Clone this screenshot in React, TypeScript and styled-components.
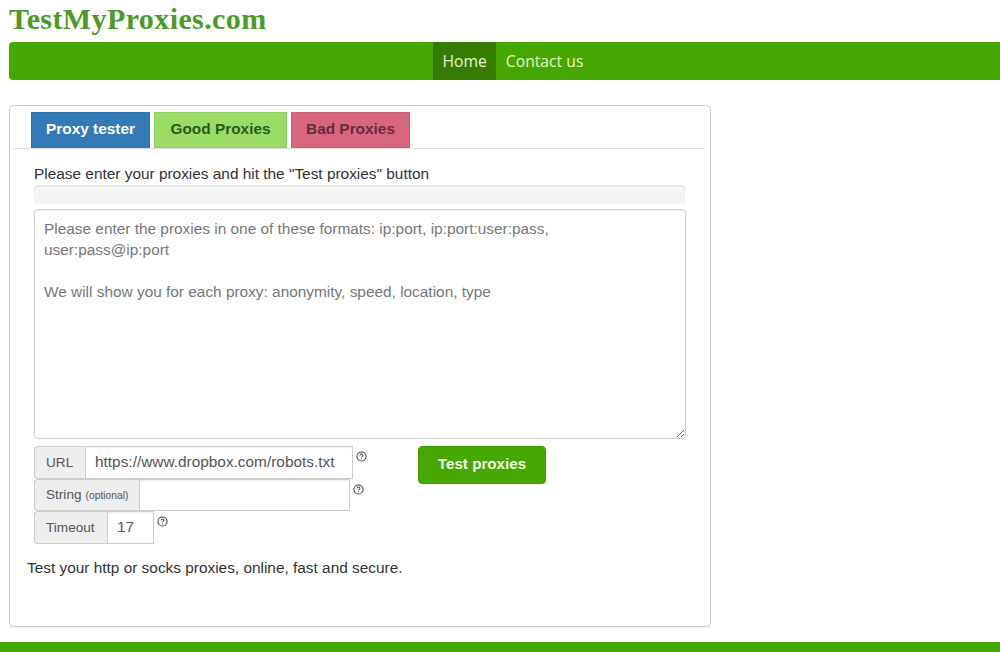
import React from "react";
import styled, { createGlobalStyle } from "styled-components";

const Global = createGlobalStyle`
  html, body { margin: 0; padding: 0; background: #fff; }
  body { font-family: "Liberation Sans", Arial, sans-serif; color: #333; overflow: hidden; }
  * { box-sizing: border-box; }
`;
const Page = styled.div`
  width: 1000px; height: 652px; display: flex; flex-direction: column; overflow: hidden;
`;
const Logo = styled.h1`
  margin: 0; padding-left: 9px; height: 42px; flex: none;
  font: bold 30px/38px "Liberation Serif", serif; letter-spacing: .4px; color: #4c9a2a;
`;
const NavBar = styled.nav`
  margin-left: 9px; width: 1000px; height: 38px; background: #46a700; border-radius: 4px 0 0 4px;
  display: flex; padding-left: 424px; flex: none;
`;
const NavLink = styled.a<{ $active?: boolean }>`
  height: 38px; padding: 0 9.5px; display: flex; align-items: center;
  font: 15.7px "Open Sans", sans-serif; color: ${p => (p.$active ? "#e8f5dc" : "#e4f7c8")};
  background: ${p => (p.$active ? "#357d00" : "transparent")};
`;
const Panel = styled.section`
  margin: 25px 0 0 9px; width: 702px; height: 522px; flex: none;
  border: 1px solid #ccc; border-radius: 4px; padding: 6px 5px 0 3px;
  box-shadow: 0 1px 1px rgba(0,0,0,.05);
`;
const Tabs = styled.div`
  display: flex; gap: 4px; padding-left: 18px; height: 37px; border-bottom: 1px solid #ddd;
`;
const Tab = styled.div<{ $bg: string; $fg: string; $w: number }>`
  width: ${p => p.$w}px; height: 36px; background: ${p => p.$bg}; color: ${p => p.$fg};
  display: flex; align-items: center; justify-content: center;
  font-weight: bold; font-size: 15.4px; padding-bottom: 2px;
  box-shadow: inset 0 0 0 1px rgba(0,0,0,.06);
`;
const Body = styled.div`
  padding: 15px 0 0 21px; width: 672px; display: flex; flex-direction: column;
`;
const Lead = styled.p`
  margin: 0; font-size: 15.4px; line-height: 20px; color: #333; height: 20px; white-space: nowrap;
`;
const Progress = styled.div`
  margin-top: 1px; height: 19px; background: #f5f5f5; border-radius: 4px;
  box-shadow: inset 0 1px 2px rgba(0,0,0,.1);
`;
const TextArea = styled.textarea`
  display: block; margin-top: 5px; width: 652px; height: 230px; padding: 8px 9px;
  border: 1px solid #d2d2d2; border-radius: 4px; resize: both; outline: none;
  font: 15.4px/21px "Liberation Sans", Arial, sans-serif; color: #555;
  box-shadow: inset 0 1px 1px rgba(0,0,0,.075);
  &::placeholder { color: #777; opacity: 1; }
`;
const FormArea = styled.div`
  margin-top: 7px; display: flex; height: 98px;
`;
const Fields = styled.div`
  width: 384px; display: flex; flex-direction: column;
`;
const Row = styled.div`
  display: flex; height: 32.5px;
`;
const Addon = styled.span<{ $w: number }>`
  width: ${p => p.$w}px; flex: none; background: #eee; border: 1px solid #ccc; border-right: 0;
  border-radius: 4px 0 0 4px; display: flex; align-items: center; padding-left: 11px;
  font-size: 13.6px; color: #555; white-space: pre;
`;
const Small = styled.small`
  font-size: 10.3px; margin-left: 4px; padding-top: 2px;
`;
const Input = styled.input<{ $w: number }>`
  width: ${p => p.$w}px; height: 100%; border: 1px solid #ccc; padding: 0 9px; outline: none;
  font: 15.4px "Liberation Sans", Arial, sans-serif; color: #555; background: #fff; border-radius: 0;
  box-shadow: inset 0 1px 1px rgba(0,0,0,.075);
`;
const Help = styled.svg`
  width: 11px; height: 11px; margin: 5px 0 0 3px; flex: none; color: #444;
`;
const TestButton = styled.button`
  width: 128px; height: 38px; background: #46a700; color: #f2fbe6; border: 1px solid #3f9a00; border-radius: 4px;
  font: bold 15.2px "Liberation Sans", Arial, sans-serif; padding: 0 0 3px;
`;
const Note = styled.p`
  margin: 14px 0 0 -7px; font-size: 15.4px; line-height: 20px; color: #333;
`;
const FootBand = styled.footer`
  margin-top: 15px; height: 10px; background: #46a700; flex: none;
`;

const HelpIcon = () => (
  <Help viewBox="0 0 12 12" fill="none" stroke="currentColor">
    <circle cx="6" cy="6" r="5" strokeWidth="1.1" />
    <path d="M4.4 4.8C4.4 3.9 5.1 3.4 6 3.4s1.6.5 1.6 1.3c0 1.1-1.6 1.1-1.6 2.2" strokeWidth="1.1" />
    <path d="M6 8v1" strokeWidth="1.1" />
  </Help>
);

const placeholder = `Please enter the proxies in one of these formats: ip:port, ip:port:user:pass, user:pass@ip:port

We will show you for each proxy: anonymity, speed, location, type`;

export default function App() {
  return (
    <Page>
      <Global />
      <Logo>TestMyProxies.com</Logo>
      <NavBar>
        <NavLink $active>Home</NavLink>
        <NavLink>Contact us</NavLink>
      </NavBar>
      <Panel>
        <Tabs>
          <Tab $bg="#337ab7" $fg="#fff" $w={119}>Proxy tester</Tab>
          <Tab $bg="#9bdc66" $fg="#2a5a1a" $w={133}>Good Proxies</Tab>
          <Tab $bg="#d9667f" $fg="#6a2a3c" $w={119}>Bad Proxies</Tab>
        </Tabs>
        <Body>
          <Lead>Please enter your proxies and hit the "Test proxies" button</Lead>
          <Progress />
          <TextArea placeholder={placeholder} />
          <FormArea>
            <Fields>
              <Row>
                <Addon $w={51}>URL</Addon>
                <Input $w={268} defaultValue="https://www.dropbox.com/robots.txt" />
                <HelpIcon />
              </Row>
              <Row>
                <Addon $w={105}>String<Small>(optional)</Small></Addon>
                <Input $w={211} />
                <HelpIcon />
              </Row>
              <Row>
                <Addon $w={73}>Timeout</Addon>
                <Input $w={47} defaultValue="17" />
                <HelpIcon />
              </Row>
            </Fields>
            <TestButton>Test proxies</TestButton>
          </FormArea>
          <Note>Test your http or socks proxies, online, fast and secure.</Note>
        </Body>
      </Panel>
      <FootBand />
    </Page>
  );
}
